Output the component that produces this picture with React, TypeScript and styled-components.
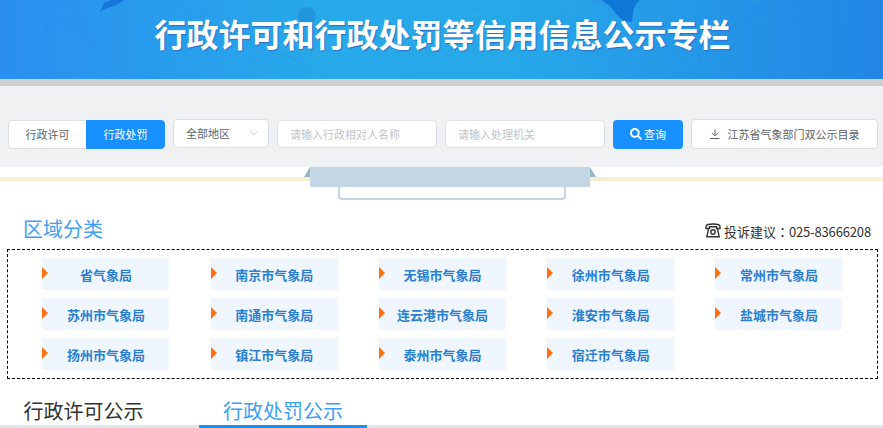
import * as React from 'react'
import styled, { createGlobalStyle } from 'styled-components'
import { FaSearch } from 'react-icons/fa'
import { ChevronDown } from 'lucide-react'

const GlobalStyle = createGlobalStyle`
  html, body {
    margin: 0;
    padding: 0;
    height: 428px;
    overflow: hidden;
    background: #fff;
    font-family: "Noto Sans CJK SC", "Liberation Sans", sans-serif;
  }
  * { box-sizing: border-box; }
  input::placeholder { color: #c0c4cc; opacity: 1; }
`

const Page = styled.div`
  width: 883px;
  height: 428px;
  overflow: hidden;
`

const Banner = styled.header`
  position: relative;
  height: 86px;
  border-bottom: 7px solid #d0cfd0;
  background: linear-gradient(90deg, #2a8ff0 0%, #27aae9 38%, #27a8e9 58%, #2286e5 100%);
  display: flex;
  justify-content: center;
  overflow: hidden;
`

const BannerArt = styled.svg`
  position: absolute;
  left: 0;
  top: 0;
`

const BannerTitle = styled.h1`
  position: relative;
  margin: 11px 0 0 2px;
  font-size: 32px;
  line-height: 44px;
  font-weight: 700;
  color: #fff;
  text-shadow: 1px 1px 1px #2a6fc8;
  white-space: nowrap;
`

const Toolbar = styled.div`
  height: 81px;
  padding: 33px 0 0 8px;
  background: #f0f1f3;
  display: flex;
  align-items: flex-start;
  gap: 8px;
`

const Segmented = styled.div`
  margin-top: 1px;
  width: 157px;
  height: 29px;
  display: flex;
`

const Segment = styled.div<{ $active?: boolean }>`
  flex: 1;
  padding-bottom: 1px;
  display: flex;
  align-items: center;
  justify-content: center;
  font-size: 11px;
  color: ${p => (p.$active ? '#fff' : '#606266')};
  background: ${p => (p.$active ? '#1890ff' : '#fff')};
  border: 1px solid ${p => (p.$active ? '#1890ff' : '#dcdfe6')};
  border-right-width: ${p => (p.$active ? '1px' : '0')};
  border-radius: ${p => (p.$active ? '0 4px 4px 0' : '4px 0 0 4px')};
`

const SelectBox = styled.div`
  width: 96px;
  height: 29px;
  padding: 0 7px 1px 12px;
  background: #fff;
  border: 1px solid #dcdfe6;
  border-radius: 4px;
  display: flex;
  align-items: center;
  justify-content: space-between;
  font-size: 11px;
  color: #606266;
`

const TextInput = styled.input`
  margin-top: 1px;
  width: 160px;
  height: 28px;
  padding: 0 12px 1px;
  background: #fff;
  border: 1px solid #dcdfe6;
  border-radius: 4px;
  font-family: inherit;
  font-size: 11px;
  outline: none;
`

const SearchButton = styled.button`
  margin-top: 1px;
  width: 70px;
  height: 29px;
  padding: 0 0 1px;
  background: #1890ff;
  border: 0;
  border-radius: 4px;
  color: #fff;
  font-family: inherit;
  font-size: 11px;
  display: flex;
  align-items: center;
  justify-content: center;
  gap: 2px;
`

const ExportButton = styled.button`
  width: 187px;
  height: 30px;
  padding: 0 0 1px;
  background: #fff;
  border: 1px solid #dcdfe6;
  border-radius: 4px;
  color: #606266;
  font-family: inherit;
  font-size: 11px;
  display: flex;
  align-items: center;
  justify-content: center;
  gap: 8px;
`

const Ribbon = styled.div`
  height: 33px;
  padding-left: 310px;
  background: linear-gradient(#f8edd0, #f8edd0) 0 10px / 100% 4px no-repeat;
`

const RibbonBar = styled.div`
  position: relative;
  width: 280px;
  height: 20px;
  background: #c2d7e3;

  &::before,
  &::after {
    content: '';
    position: absolute;
    top: 0;
    border-bottom: 10px solid #96b7c9;
  }
  &::before {
    left: -6px;
    border-left: 6px solid transparent;
  }
  &::after {
    right: -6px;
    border-right: 6px solid transparent;
  }
`

const RibbonTray = styled.div`
  width: 228px;
  height: 13px;
  margin-left: 28px;
  border: 2px solid #c2d7e3;
  border-top: 0;
  border-radius: 0 0 4px 4px;
`

const RegionHead = styled.div`
  height: 49px;
  padding: 14px 12px 0 23px;
  display: flex;
  justify-content: space-between;
  align-items: flex-start;
`

const RegionTitle = styled.h2`
  margin: 0;
  font-size: 20px;
  line-height: 30px;
  font-weight: 400;
  color: #3ea0f7;
`

const Hotline = styled.div`
  margin-top: 8px;
  display: flex;
  align-items: center;
  gap: 3px;
  font-size: 13px;
  line-height: 20px;
  color: #333;
`

const HotlineIcon = styled.svg`
  margin-top: -3px;
`

const HotlineColon = styled.span`
  font-family: "Noto Sans CJK TC", sans-serif;
`

const HotlineNumber = styled.span`
  letter-spacing: -0.15px;
`

const RegionPanel = styled.div`
  width: 871px;
  margin-left: 7px;
  padding: 8px 0 8px 34.4px;
  border: 1px dashed #000;
  display: grid;
  grid-template-columns: repeat(5, 127px);
  grid-auto-rows: 32px;
  column-gap: 41.25px;
  row-gap: 8px;
`

const RegionItem = styled.a`
  position: relative;
  display: flex;
  align-items: center;
  justify-content: center;
  background: #eff6fe;
  font-size: 13px;
  font-weight: 700;
  color: #2a7fd0;

  &::before {
    content: '';
    position: absolute;
    left: 0;
    top: 9px;
    border-left: 6px solid #ff6f0f;
    border-top: 6px solid transparent;
    border-bottom: 6px solid transparent;
  }
`

const TabBar = styled.div`
  margin-top: 13px;
  height: 36px;
  display: flex;
  gap: 32px;
  border-bottom: 3px solid #e0e6ed;
`

const Tab = styled.div<{ $active?: boolean; $first?: boolean }>`
  width: ${p => (p.$first ? '167px' : '168px')};
  height: 36px;
  padding-top: 2px;
  text-align: center;
  font-size: 20px;
  line-height: 33px;
  color: ${p => (p.$active ? '#3ea0f7' : '#333')};
  border-bottom: 3px solid ${p => (p.$active ? '#1890ff' : 'transparent')};
`

const regions = [
  '省气象局', '南京市气象局', '无锡市气象局', '徐州市气象局', '常州市气象局',
  '苏州市气象局', '南通市气象局', '连云港市气象局', '淮安市气象局', '盐城市气象局',
  '扬州市气象局', '镇江市气象局', '泰州市气象局', '宿迁市气象局',
]

// faint network lines and the map pieces behind the title
const artLines = [
  'M20 79 L60 0', 'M48 79 L46 0', 'M60 20 L140 79', 'M70 0 L110 79', 'M130 0 L160 79', 'M215 0 L150 79',
  'M160 20 L300 60', 'M300 15 L230 79', 'M240 30 L330 79', 'M165 0 L290 40', 'M350 35 L480 10',
  'M400 79 L480 20', 'M520 79 L460 15', 'M530 0 L600 30', 'M640 12 L700 79', 'M700 0 L700 79',
  'M745 0 L700 60', 'M795 0 L770 79', 'M800 20 L830 79', 'M740 79 L860 10', 'M640 40 L770 20', 'M840 0 L880 60',
]

const BannerDecor = () => (
  <BannerArt width="883" height="79" viewBox="0 0 883 79" fill="none">
    {artLines.map(d => (
      <path key={d} d={d} stroke="#1a78d8" strokeOpacity="0.1" strokeWidth="1" />
    ))}
    <path d="M100 12 L104 3 L112 0 L124 0 L116 5 L104 9 Z" fill="#1575d8" />
    <circle cx="307" cy="16" r="9" fill="#2296dd" />
    <path d="M597 0 L640 0 L636 4 L633 12 L632 22 L624 21 L617 15 L610 6 Z" fill="#0f78d6" />
    <path d="M590 0 L602 0 L610 6 L604 4 Z" fill="#2b9ae6" />
    <path d="M752 0 L760 0 L759 3 L754 3 Z" fill="#2a95e0" />
  </BannerArt>
)

const PhoneIcon = () => (
  <HotlineIcon width="16" height="15" viewBox="0 0 16 15" fill="none" stroke="#333" strokeWidth="1.4">
    <path d="M1 5.5 V3.5 C1 1.5 4 1 8 1 C12 1 15 1.5 15 3.5 V5.5 H11.5 V3.8 H4.5 V5.5 Z" />
    <path d="M3.5 6 L1.8 13.7 H14.2 L12.5 6" />
    <circle cx="8" cy="9" r="2.2" />
  </HotlineIcon>
)

const DownloadIcon = () => (
  <svg width="10" height="10" viewBox="0 0 10 10" fill="none" stroke="#606266" strokeWidth="1">
    <path d="M5 0.5 V6.5 M2 3.8 L5 6.8 L8 3.8 M0.5 9.5 H9.5" />
  </svg>
)

export default function App() {
  return (
    <Page>
      <GlobalStyle />
      <Banner>
        <BannerDecor />
        <BannerTitle>行政许可和行政处罚等信用信息公示专栏</BannerTitle>
      </Banner>
      <Toolbar>
        <Segmented>
          <Segment>行政许可</Segment>
          <Segment $active>行政处罚</Segment>
        </Segmented>
        <SelectBox>
          全部地区
          <ChevronDown size={14} color="#c0c4cc" strokeWidth={1.5} />
        </SelectBox>
        <TextInput placeholder="请输入行政相对人名称" />
        <TextInput placeholder="请输入处理机关" />
        <SearchButton>
          <FaSearch size={12} />
          查询
        </SearchButton>
        <ExportButton>
          <DownloadIcon />
          江苏省气象部门双公示目录
        </ExportButton>
      </Toolbar>
      <Ribbon>
        <RibbonBar />
        <RibbonTray />
      </Ribbon>
      <RegionHead>
        <RegionTitle>区域分类</RegionTitle>
        <Hotline>
          <PhoneIcon />
          <span>
            投诉建议<HotlineColon>：</HotlineColon>
            <HotlineNumber>025-83666208</HotlineNumber>
          </span>
        </Hotline>
      </RegionHead>
      <RegionPanel>
        {regions.map(name => (
          <RegionItem key={name}>{name}</RegionItem>
        ))}
      </RegionPanel>
      <TabBar>
        <Tab $first>行政许可公示</Tab>
        <Tab $active>行政处罚公示</Tab>
      </TabBar>
    </Page>
  )
}
